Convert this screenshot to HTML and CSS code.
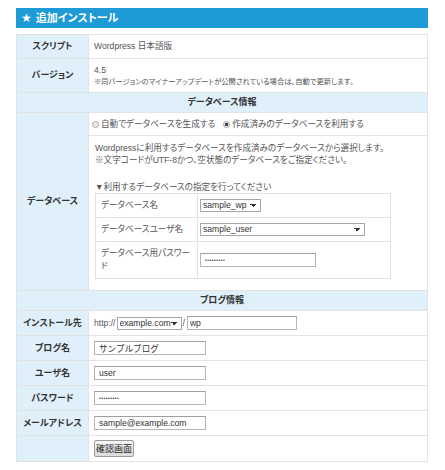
FILE: index.html
```html
<!DOCTYPE html>
<html lang="ja">
<head>
<meta charset="utf-8">
<title>追加インストール</title>
<link rel="stylesheet" href="styles.css">
</head>
<body>
<div class="page">
  <h1 class="titlebar"><span class="star">★</span>追加インストール</h1>
  <table class="form">
    <tr>
      <th class="lbl">スクリプト</th>
      <td class="val">Wordpress 日本語版</td>
    </tr>
    <tr>
      <th class="lbl">バージョン</th>
      <td class="val">4.5<div class="note">※同バージョンのマイナーアップデートが公開されている場合は、自動で更新します。</div></td>
    </tr>
    <tr>
      <th class="sec" colspan="2">データベース情報</th>
    </tr>
    <tr>
      <th class="lbl">データベース</th>
      <td class="db">
        <div class="radios">
          <label class="radio"><input type="radio" name="dbmode">自動でデータベースを生成する</label>
          <label class="radio"><input type="radio" name="dbmode" checked>作成済みのデータベースを利用する</label>
        </div>
        <div class="dbbody">
          <p class="desc">Wordpressに利用するデータベースを作成済みのデータベースから選択します。<br>※文字コードがUTF-8かつ、空状態のデータベースをご指定ください。</p>
          <p class="pick">▼利用するデータベースの指定を行ってください</p>
          <table class="inner">
            <tr>
              <td class="ilbl">データベース名</td>
              <td class="ival"><select class="sel sel-wp"><option>sample_wp</option></select></td>
            </tr>
            <tr>
              <td class="ilbl">データベースユーザ名</td>
              <td class="ival"><select class="sel sel-user"><option>sample_user</option></select></td>
            </tr>
            <tr>
              <td class="ilbl">データベース用パスワード</td>
              <td class="ival"><input class="txt txt-dbpw pw" type="password" value="password1"></td>
            </tr>
          </table>
        </div>
      </td>
    </tr>
    <tr>
      <th class="sec" colspan="2">ブログ情報</th>
    </tr>
    <tr>
      <th class="lbl">インストール先</th>
      <td class="val"><div class="dest">http://<select class="sel sel-dom"><option>example.com</option></select>/<input class="txt txt-path" type="text" value="wp"></div></td>
    </tr>
    <tr>
      <th class="lbl">ブログ名</th>
      <td class="val"><input class="txt" type="text" value="サンプルブログ"></td>
    </tr>
    <tr>
      <th class="lbl">ユーザ名</th>
      <td class="val"><input class="txt" type="text" value="user"></td>
    </tr>
    <tr>
      <th class="lbl">パスワード</th>
      <td class="val"><input class="txt pw" type="password" value="password1"></td>
    </tr>
    <tr>
      <th class="lbl">メールアドレス</th>
      <td class="val"><input class="txt" type="text" value="sample@example.com"></td>
    </tr>
    <tr>
      <th class="lbl"></th>
      <td class="val btnrow"><button class="btn" type="button">確認画面</button></td>
    </tr>
  </table>
</div>
</body>
</html>
```

FILE: styles.css
```css
* { box-sizing: border-box; }

html, body {
  margin: 0;
  padding: 0;
  background: #fff;
}

body {
  font-family: "Liberation Sans", "Noto Sans CJK JP", sans-serif;
  font-size: 8.6px;
  line-height: 13px;
  color: #555;
  font-feature-settings: "palt";
}

.page {
  padding: 8px 17px 10px 16px;
}

.titlebar {
  margin: 0 0 6px;
  height: 20px;
  background: #1e9ad6;
  color: #fff;
  font-size: 11px;
  font-weight: bold;
  line-height: 20px;
  padding-left: 5px;
  display: flex;
  align-items: center;
  gap: 4px;
}

.star {
  font-size: 12px;
  font-family: "DejaVu Sans", sans-serif;
}

.form {
  width: 100%;
  border-collapse: collapse;
  border: 1px solid #e3e3e3;
}

.form th,
.form td {
  border: 1px solid #e3e3e3;
  padding: 5px 5px;
  vertical-align: middle;
}

.form th.lbl {
  width: 72px;
  background: #dff0fb;
  color: #333;
  font-size: 9px;
  font-weight: bold;
  text-align: center;
  white-space: nowrap;
  padding: 5px 2px;
}

.form td.val {
  background: #fff;
  text-align: left;
}

.form th.sec {
  background: #dff0fb;
  color: #333;
  font-size: 9px;
  font-weight: bold;
  text-align: center;
  padding: 3px 5px;
}

.note {
  font-size: 7.3px;
  line-height: 10px;
}

.form td.db {
  padding: 0;
}

.radios {
  height: 23px;
  border-bottom: 1px solid #e3e3e3;
  display: flex;
  align-items: center;
  gap: 8px;
  padding-left: 3px;
}

.radio {
  display: flex;
  align-items: center;
  gap: 2px;
}

.radio input {
  appearance: none;
  -webkit-appearance: none;
  margin: 0;
  width: 7px;
  height: 7px;
  border-radius: 50%;
  border: 1px solid #a9a9a9;
  background: #e8e8e8;
}

.radio input:checked {
  background: radial-gradient(circle, #444 0 1.6px, #e8e8e8 2px);
}

.dbbody {
  padding: 6px 6px 11px 6px;
}

.desc {
  margin: 0;
  line-height: 12px;
  white-space: nowrap;
}

.pick {
  margin: 15px 0 0;
  line-height: 12px;
}

.inner {
  width: 296px;
  border-collapse: collapse;
  border: 1px solid #e3e3e3;
}

.inner td {
  border: 1px solid #e3e3e3;
  padding: 5px 5px;
  vertical-align: middle;
}

.inner td.ilbl {
  width: 102px;
}

.inner td.ival {
  padding-left: 2px;
}

.sel {
  appearance: none;
  -webkit-appearance: none;
  font-family: "Liberation Sans", "Noto Sans CJK JP", sans-serif;
  font-size: 8.6px;
  color: #333;
  height: 13px;
  line-height: 11px;
  margin: 0;
  padding: 0 9px 0 2px;
  border: 1px solid #a6a6a6;
  border-radius: 0;
  background-color: #fff;
  background-image:
    linear-gradient(45deg, transparent 50%, #333 50%),
    linear-gradient(135deg, #333 50%, transparent 50%);
  background-position: calc(100% - 7px) 4px, calc(100% - 4px) 4px;
  background-size: 3px 3px, 3px 3px;
  background-repeat: no-repeat;
  display: block;
}

.sel-wp { width: 61px; }
.sel-user { width: 165px; }
.sel-dom { width: 65px; margin: 0 1px; }

.txt {
  font-family: "Liberation Sans", "Noto Sans CJK JP", sans-serif;
  font-size: 8.6px;
  color: #333;
  width: 112px;
  height: 14px;
  margin: 0;
  padding: 0 4px;
  border: 1px solid #b5b5b5;
  border-top-color: #a0a0a0;
  border-radius: 0;
  background: #fff;
  display: block;
}

.pw {
  font-size: 5px;
  letter-spacing: 0.5px;
}

.txt-dbpw {
  width: 116px;
}

.txt-path {
  width: 110px;
  margin-left: 2px;
  padding-left: 2px;
}

.dest {
  display: flex;
  align-items: center;
}

.btnrow {
  padding-top: 4px !important;
  padding-bottom: 4px !important;
}

.btn {
  font-family: "Noto Sans CJK JP", sans-serif;
  font-size: 9px;
  line-height: 12px;
  color: #222;
  height: 17px;
  width: 40px;
  padding: 0;
  margin: 0;
  border: 1px solid #9a9a9a;
  border-radius: 2px;
  background: linear-gradient(#f6f6f6, #dcdcdc);
  display: block;
}
```
